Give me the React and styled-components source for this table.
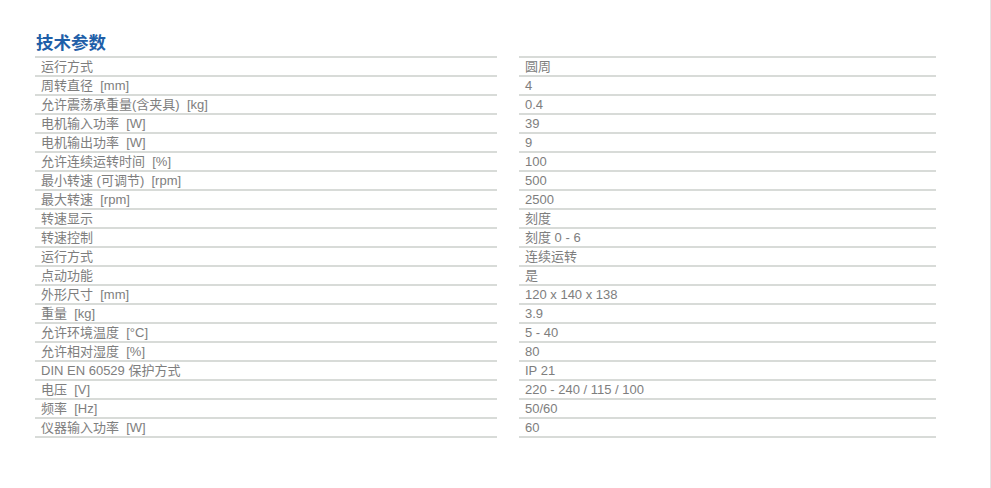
import { Fragment } from "react";
import styled, { createGlobalStyle } from "styled-components";

const GlobalStyle = createGlobalStyle`
  html, body {
    margin: 0;
    padding: 0;
    background: #fff;
  }
`;

const Page = styled.div`
  box-sizing: border-box;
  width: 991px;
  min-height: 488px;
  border-right: 1px solid #e4e4e4;
  padding: 32px 0 0 35px;
  font-family: "Liberation Sans", "Noto Sans CJK SC", Arial, sans-serif;
`;

const Title = styled.h2`
  margin: 0 0 4px 1px;
  font-size: 17.5px;
  line-height: 20px;
  font-weight: bold;
  color: #1f5fa8;
  font-family: "Noto Sans CJK SC", sans-serif;
`;

const Table = styled.div`
  display: grid;
  grid-template-columns: 462px 417px;
  column-gap: 22px;
  width: 901px;
`;

const Cell = styled.div`
  height: 17px;
  line-height: 17px;
  border-bottom: 2px solid #d8dbd8;
  border-top: ${(p) => (p.$first ? "2px solid #d8dbd8" : "none")};
  padding-left: 6px;
  font-size: 13px;
  color: #7e7e7e;
  white-space: pre;
  overflow: hidden;
`;

const specs = [
  ["运行方式", "圆周"],
  ["周转直径  [mm]", "4"],
  ["允许震荡承重量(含夹具)  [kg]", "0.4"],
  ["电机输入功率  [W]", "39"],
  ["电机输出功率  [W]", "9"],
  ["允许连续运转时间  [%]", "100"],
  ["最小转速 (可调节)  [rpm]", "500"],
  ["最大转速  [rpm]", "2500"],
  ["转速显示", "刻度"],
  ["转速控制", "刻度 0 - 6"],
  ["运行方式", "连续运转"],
  ["点动功能", "是"],
  ["外形尺寸  [mm]", "120 x 140 x 138"],
  ["重量  [kg]", "3.9"],
  ["允许环境温度  [°C]", "5 - 40"],
  ["允许相对湿度  [%]", "80"],
  ["DIN EN 60529 保护方式", "IP 21"],
  ["电压  [V]", "220 - 240 / 115 / 100"],
  ["频率  [Hz]", "50/60"],
  ["仪器输入功率  [W]", "60"],
];

export default function App() {
  return (
    <Page>
      <GlobalStyle />
      <Title>技术参数</Title>
      <Table>
        {specs.map(([label, value], i) => (
          <Fragment key={i}>
            <Cell $first={i === 0}>{label}</Cell>
            <Cell $first={i === 0}>{value}</Cell>
          </Fragment>
        ))}
      </Table>
    </Page>
  );
}
